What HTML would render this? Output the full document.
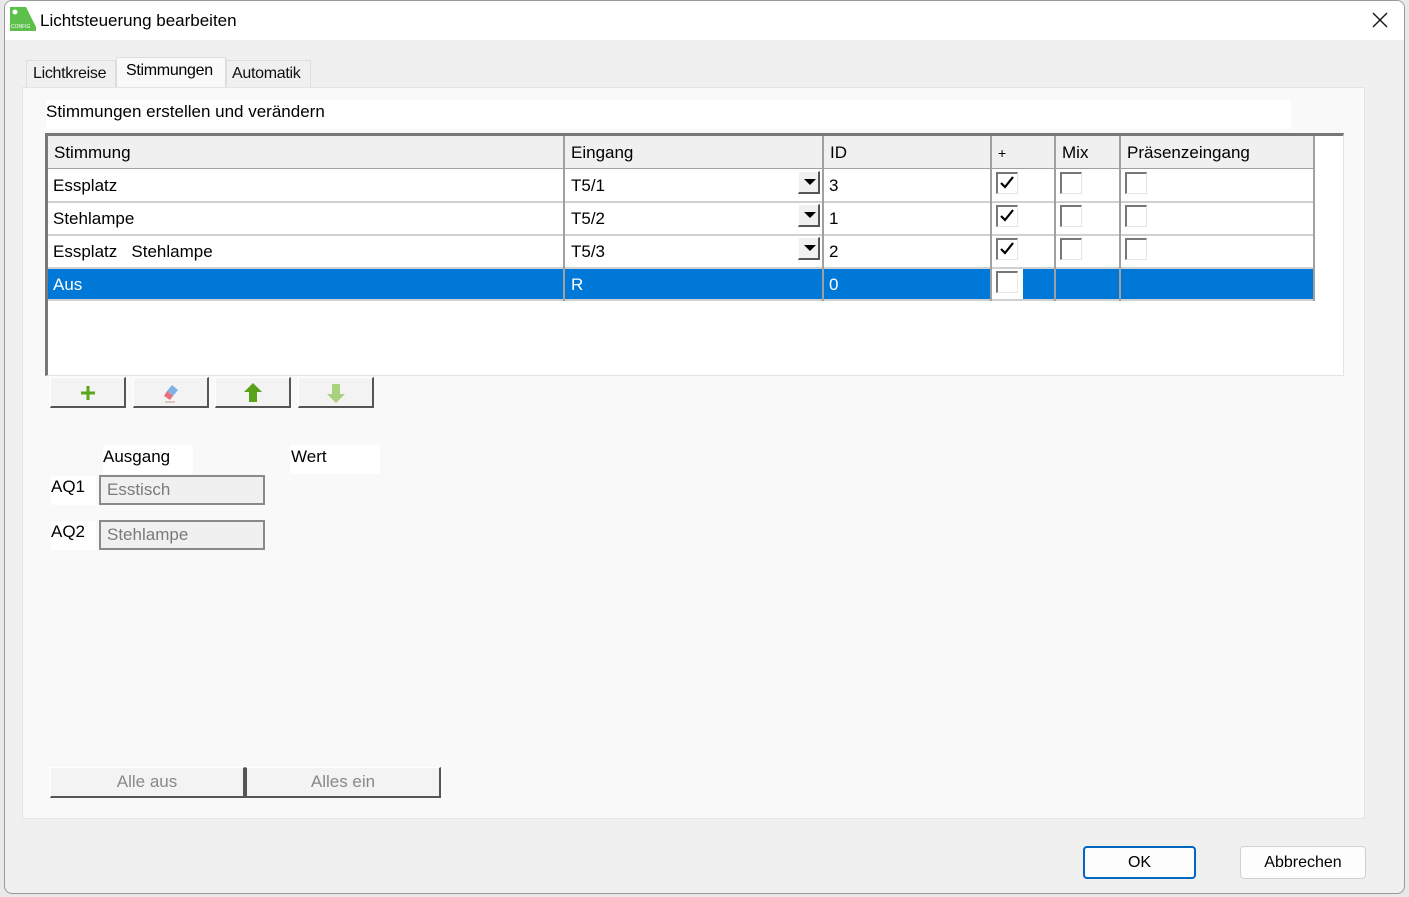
<!DOCTYPE html>
<html><head><meta charset="utf-8"><style>
*{box-sizing:border-box;margin:0;padding:0}
body{width:1409px;height:897px;background:#e9e9e9;font-family:"Liberation Sans",sans-serif;font-size:16px;color:#000;position:relative;overflow:hidden}
.a{position:absolute}
.win{left:4px;top:0;width:1401px;height:894px;background:#f0f0f0;border:1px solid #9a9a9a;border-radius:8px;overflow:hidden}
.title{left:0;top:0;width:1401px;height:39px;background:#fff}
.t{white-space:nowrap}
.cell{position:absolute;height:33px;line-height:34px;padding-left:5px;white-space:nowrap;overflow:hidden}
.hl{position:absolute;background:#d0d0d0}
.cb{position:absolute;width:22px;height:22px;background:#fff;border-top:2px solid #777;border-left:2px solid #777;border-right:1px solid #e5e5e5;border-bottom:1px solid #e5e5e5}
.dd{position:absolute;width:22px;height:23px;background:#f0f0f0;border-right:2px solid #555;border-bottom:2px solid #555;border-top:1px solid #fff;border-left:1px solid #fff}
.dd:after{content:"";position:absolute;left:5px;top:7px;border-left:6px solid transparent;border-right:6px solid transparent;border-top:6px solid #000}
.btn{position:absolute;height:31px;background:#f3f3f3;border-right:2px solid #555;border-bottom:2px solid #555;border-top:1px solid #fff;border-left:1px solid #fff}
.inp{position:absolute;width:166px;height:30px;background:#f0f0f0;border:2px solid #8a8a8a;color:#7a7a7a;padding-left:6px;line-height:26px;font-size:17px}
</style></head><body>
<div class="a win">
 <div class="a title"></div>
 <svg class="a" style="left:5px;top:6px" width="26" height="24"><path d="M0 0H16L26 20V24H0Z" fill="#5cc04a"/><circle cx="5" cy="5" r="2.5" fill="#fff"/><text x="1" y="21" font-size="5" fill="#fff" font-family="Liberation Sans">CONFIG</text></svg>
 <div class="a t" style="left:35px;top:10px;font-size:17px">Lichtsteuerung bearbeiten</div>
 <svg class="a" style="left:1367px;top:11px" width="16" height="16"><path d="M1 1L15 15M15 1L1 15" stroke="#111" stroke-width="1.4"/></svg>

 <!-- tabs -->
 <div class="a" style="left:21px;top:59px;width:90px;height:28px;background:#f0f0f0;border:1px solid #ddd;border-bottom:none"></div>
 <div class="a t" style="left:28px;top:64px;font-size:16px;letter-spacing:-0.3px;color:#111">Lichtkreise</div>
 <div class="a" style="left:111px;top:56px;width:110px;height:32px;background:#f9f9f9;border:1px solid #ddd;border-bottom:none"></div>
 <div class="a t" style="left:121px;top:61px;font-size:16px;letter-spacing:-0.3px">Stimmungen</div>
 <div class="a" style="left:221px;top:59px;width:85px;height:28px;background:#f0f0f0;border:1px solid #ddd;border-bottom:none"></div>
 <div class="a t" style="left:227px;top:64px;font-size:16px;letter-spacing:-0.3px;color:#111">Automatik</div>
 <!-- panel -->
 <div class="a" style="left:17px;top:86px;width:1343px;height:732px;background:#f9f9f9;border:1px solid #e4e4e4"></div>
 <div class="a" style="left:41px;top:99px;width:1245px;height:29px;background:#fff"></div>
 <div class="a t" style="left:41px;top:101px;font-size:17px">Stimmungen erstellen und verändern</div>

 <!-- grid -->
 <div class="a" style="left:40px;top:132px;width:1299px;height:243px;background:#fff;border-top:3px solid #777;border-left:3px solid #777;border-right:1px solid #e4e4e4;border-bottom:1px solid #e4e4e4"></div>
 <div class="a" style="left:43px;top:135px;width:1266px;height:33px;background:#f0f0f0"></div>
 <div class="a" style="left:43px;top:267px;width:1266px;height:32px;background:#0078d7"></div>
 <!-- horizontal lines -->
 <div class="hl" style="left:43px;top:167px;width:1266px;height:1px;background:#a0a0a0"></div>
 <div class="hl" style="left:43px;top:200px;width:1266px;height:2px"></div>
 <div class="hl" style="left:43px;top:233px;width:1266px;height:2px"></div>
 <div class="hl" style="left:43px;top:266px;width:1266px;height:2px"></div>
 <div class="hl" style="left:43px;top:298px;width:1266px;height:2px"></div>
 <!-- vertical lines -->
 <div class="hl" style="left:558px;top:135px;width:2px;height:165px;background:#a0a0a0"></div>
 <div class="hl" style="left:817px;top:135px;width:2px;height:165px;background:#a0a0a0"></div>
 <div class="hl" style="left:985px;top:135px;width:2px;height:165px;background:#a0a0a0"></div>
 <div class="hl" style="left:1049px;top:135px;width:2px;height:165px;background:#a0a0a0"></div>
 <div class="hl" style="left:1114px;top:135px;width:2px;height:165px;background:#a0a0a0"></div>
 <div class="hl" style="left:1308px;top:135px;width:2px;height:165px;background:#a0a0a0"></div>
 <!-- header text -->
 <div class="cell" style="left:44px;top:135px;font-size:17px">Stimmung</div>
 <div class="cell" style="left:561px;top:135px;font-size:17px">Eingang</div>
 <div class="cell" style="left:820px;top:135px;font-size:17px">ID</div>
 <div class="cell" style="left:988px;top:135px;font-size:14px">+</div>
 <div class="cell" style="left:1052px;top:135px;font-size:17px">Mix</div>
 <div class="cell" style="left:1117px;top:135px;font-size:17px">Präsenzeingang</div>
 <!-- rows -->
 <div class="cell" style="left:43px;top:168px;font-size:17px">Essplatz</div>
 <div class="cell" style="left:43px;top:201px;font-size:17px">Stehlampe</div>
 <div class="cell" style="left:43px;top:234px;font-size:17px">Essplatz&nbsp;&nbsp; Stehlampe</div>
 <div class="cell" style="left:43px;top:267px;font-size:17px;color:#fff">Aus</div>
 <div class="cell" style="left:561px;top:168px;font-size:17px">T5/1</div>
 <div class="cell" style="left:561px;top:201px;font-size:17px">T5/2</div>
 <div class="cell" style="left:561px;top:234px;font-size:17px">T5/3</div>
 <div class="cell" style="left:561px;top:267px;font-size:17px;color:#fff">R</div>
 <div class="dd" style="left:793px;top:170px"></div>
 <div class="dd" style="left:793px;top:203px"></div>
 <div class="dd" style="left:793px;top:236px"></div>
 <div class="cell" style="left:819px;top:168px;font-size:17px">3</div>
 <div class="cell" style="left:819px;top:201px;font-size:17px">1</div>
 <div class="cell" style="left:819px;top:234px;font-size:17px">2</div>
 <div class="cell" style="left:819px;top:267px;font-size:17px;color:#fff">0</div>
 <!-- checkboxes -->
 <div class="cb" style="left:991px;top:171px"><svg width="18" height="18"><path d="M3 9L7 13L15 3" stroke="#000" stroke-width="2.2" fill="none"/></svg></div>
 <div class="cb" style="left:991px;top:204px"><svg width="18" height="18"><path d="M3 9L7 13L15 3" stroke="#000" stroke-width="2.2" fill="none"/></svg></div>
 <div class="cb" style="left:991px;top:237px"><svg width="18" height="18"><path d="M3 9L7 13L15 3" stroke="#000" stroke-width="2.2" fill="none"/></svg></div>
 <div class="a" style="left:987px;top:268px;width:31px;height:30px;background:#fff"></div>
 <div class="cb" style="left:991px;top:270px"></div>
 <div class="cb" style="left:1055px;top:171px"></div>
 <div class="cb" style="left:1055px;top:204px"></div>
 <div class="cb" style="left:1055px;top:237px"></div>
 <div class="cb" style="left:1120px;top:171px"></div>
 <div class="cb" style="left:1120px;top:204px"></div>
 <div class="cb" style="left:1120px;top:237px"></div>

 <!-- toolbar buttons -->
 <div class="btn" style="left:45px;top:376px;width:76px"><svg class="a" style="left:28px;top:6px" width="18" height="18"><path d="M9 2V16M2 9H16" stroke="#5aa51e" stroke-width="3"/></svg></div>
 <div class="btn" style="left:128px;top:376px;width:76px"><svg class="a" style="left:26px;top:4px" width="22" height="22"><path d="M12 3L18 8L13 14L7 9Z" fill="#7fb0e6"/><path d="M7 9L13 14L10 18L4 14Z" fill="#e8707a"/><path d="M5 20H15" stroke="#c98" stroke-width="1"/></svg></div>
 <div class="btn" style="left:210px;top:376px;width:76px"><svg class="a" style="left:27px;top:4px" width="20" height="22"><path d="M10 1L19 10H14V20H6V10H1Z" fill="#58a21c"/></svg></div>
 <div class="btn" style="left:293px;top:376px;width:76px"><svg class="a" style="left:27px;top:4px" width="20" height="22"><path d="M10 21L19 12H14V2H6V12H1Z" fill="#a9d27e"/></svg></div>

 <!-- outputs -->
 <div class="a" style="left:98px;top:444px;width:90px;height:29px;background:#fff"></div>
 <div class="a t" style="left:98px;top:446px;font-size:17px">Ausgang</div>
 <div class="a" style="left:285px;top:444px;width:90px;height:29px;background:#fff"></div>
 <div class="a t" style="left:286px;top:446px;font-size:17px">Wert</div>
 <div class="a" style="left:46px;top:475px;width:45px;height:29px;background:#fff"></div>
 <div class="a t" style="left:46px;top:476px;font-size:17px">AQ1</div>
 <div class="a" style="left:46px;top:520px;width:45px;height:29px;background:#fff"></div>
 <div class="a t" style="left:46px;top:521px;font-size:17px">AQ2</div>
 <div class="inp" style="left:94px;top:474px">Esstisch</div>
 <div class="inp" style="left:94px;top:519px">Stehlampe</div>

 <!-- bottom buttons -->
 <div class="btn" style="left:45px;top:766px;width:195px;height:31px;text-align:center;line-height:28px;color:#888;font-size:17px">Alle aus</div>
 <div class="btn" style="left:240px;top:766px;width:196px;height:31px;text-align:center;line-height:28px;color:#888;font-size:17px;border-left:2px solid #555">Alles ein</div>

 <div class="a" style="left:1078px;top:845px;width:113px;height:33px;background:#fdfdfd;border:2px solid #0067c0;border-radius:4px;text-align:center;line-height:29px;font-size:16px">OK</div>
 <div class="a" style="left:1235px;top:845px;width:126px;height:33px;background:#fdfdfd;border:1px solid #d0d0d0;border-radius:4px;text-align:center;line-height:31px;font-size:16px">Abbrechen</div>
</div>
</body></html>
